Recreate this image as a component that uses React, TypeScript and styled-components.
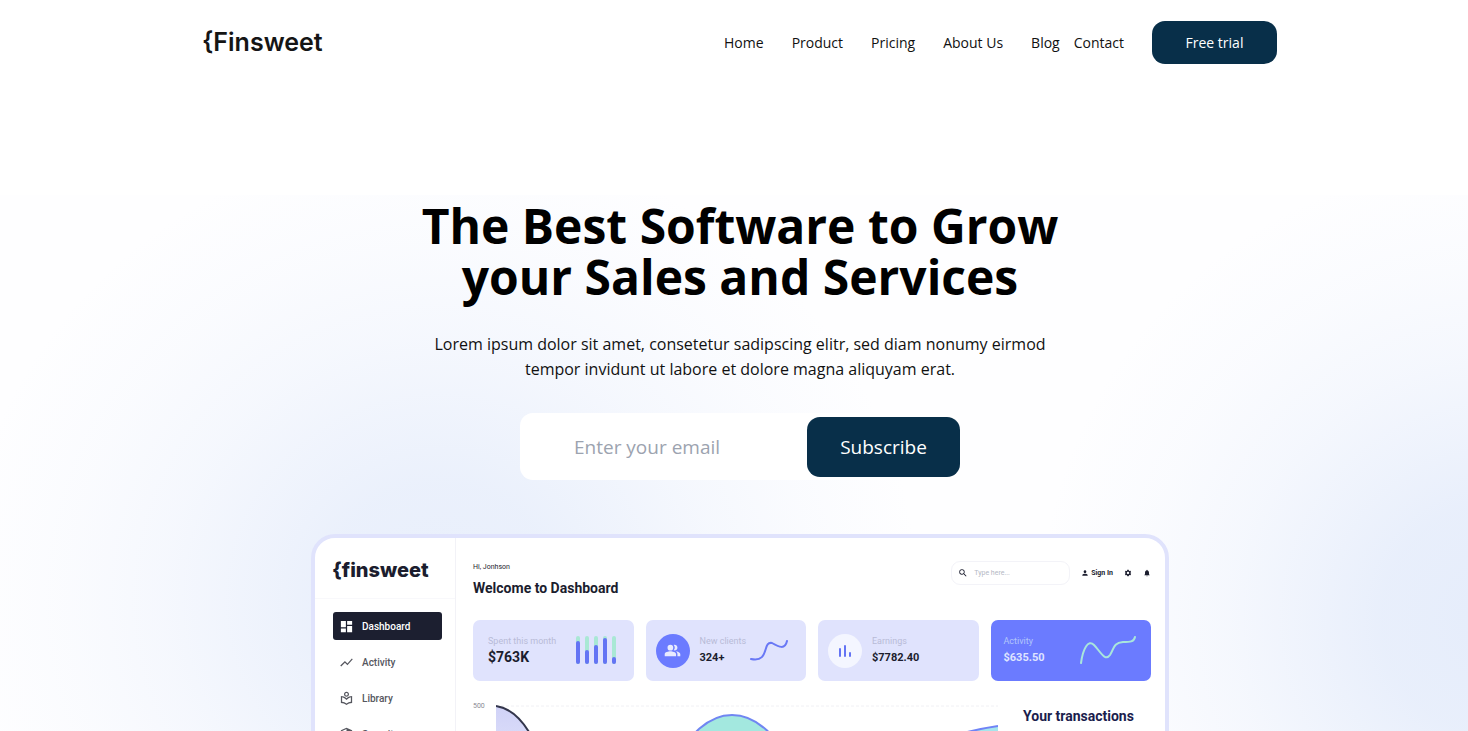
import React from "react";
import styled, { createGlobalStyle } from "styled-components";
import { MdDashboard, MdShowChart, MdOutlineLocalLibrary, MdSecurity, MdPeopleAlt, MdPerson, MdSettings, MdNotifications, MdSearch } from "react-icons/md";

const GlobalStyle = createGlobalStyle`
  *, *::before, *::after { box-sizing: border-box; }
  body { margin: 0; background: #fff; color: #000; font-family: "Open Sans", "Noto Sans", sans-serif; }
  button, input { font: inherit; border: 0; }
  h1, h2, h3, p, ul { margin: 0; padding: 0; }
`;

const Page = styled.div`
  display: flex;
  flex-direction: column;
  height: 100vh;
  overflow: hidden;
`;

const Header = styled.header`
  display: flex;
  justify-content: space-between;
  align-items: center;
  width: 100%;
  max-width: 1468px;
  margin: 0 auto;
  padding: 21px 191px 131px 202px;
`;

const Brand = styled.a`
  color: #151515;
  font: 600 25px/43px Inter, sans-serif;
  text-decoration: none;
`;

const Nav = styled.nav`
  display: flex;
  align-items: center;
  gap: 28px;
`;

const NavGroup = styled.span`
  display: flex;
  gap: 14px;
`;

const NavLink = styled.a`
  color: #111;
  font-size: 14px;
  text-decoration: none;
`;

const TrialButton = styled.button`
  width: 125px;
  height: 43px;
  border-radius: 13px;
  background: #082f49;
  color: #fff;
  font-size: 14px;
`;

const Hero = styled.main`
  display: flex;
  flex: 1 0 auto;
  flex-direction: column;
  align-items: center;
  padding: 5px 0 0 12px;
  background:
    radial-gradient(ellipse 480px 460px at 30% 405px, rgba(200, 216, 246, 0.4) 0%, rgba(200, 216, 246, 0.36) 25%, rgba(200, 216, 246, 0.26) 42%, rgba(200, 216, 246, 0.16) 58%, rgba(200, 216, 246, 0.07) 78%, rgba(200, 216, 246, 0) 100%),
    radial-gradient(ellipse 460px 460px at 102% 425px, rgba(200, 216, 246, 0.46) 0%, rgba(200, 216, 246, 0.4) 25%, rgba(200, 216, 246, 0.28) 42%, rgba(200, 216, 246, 0.17) 58%, rgba(200, 216, 246, 0.07) 78%, rgba(200, 216, 246, 0) 100%),
    #fefeff;
`;

const Title = styled.h1`
  max-width: 700px;
  font-size: 48px;
  line-height: 51px;
  font-weight: 700;
  text-align: center;
`;

const Lead = styled.p`
  max-width: 640px;
  margin-top: 30px;
  color: #111;
  font-size: 16px;
  line-height: 25px;
  text-align: center;
`;

const Signup = styled.form`
  display: flex;
  align-items: center;
  width: 440px;
  height: 67px;
  margin: 31px 0 54px;
  border-radius: 13px;
  background: #fff;
`;

const EmailInput = styled.input`
  flex: 1;
  min-width: 0;
  padding: 0 20px 0 54px;
  background: transparent;
  font-size: 19px;
  outline: none;
  &::placeholder { color: #9ca3af; opacity: 1; }
`;

const SubscribeButton = styled.button`
  width: 153px;
  height: 60px;
  border-radius: 13px;
  background: #082f49;
  color: #fff;
  font-size: 19px;
`;

const Dashboard = styled.section`
  display: grid;
  grid-template-columns: 141px 1fr;
  width: 858px;
  height: 560px;
  margin-bottom: -362px;
  border: 4px solid #e0e3fc;
  border-radius: 24px;
  background: #fff;
  color: #1b1d2e;
  font-family: Roboto, sans-serif;
`;

const Sidebar = styled.aside`
  border-right: 1px solid #f2f2f7;
`;

const SideBrand = styled.div`
  height: 61px;
  padding: 16px 0 0 17px;
  border-bottom: 1px solid #f8f8fb;
  font: 800 20px/32px Inter, sans-serif;
`;

const Menu = styled.ul`
  display: flex;
  flex-direction: column;
  gap: 8px;
  padding: 13px 13px 0 18px;
  list-style: none;
`;

const MenuButton = styled.button<{ $active?: boolean }>`
  display: flex;
  align-items: center;
  gap: 8px;
  width: 100%;
  height: 28px;
  padding: 0 6px;
  border-radius: 3px;
  background: ${(p) => (p.$active ? "#1c1f30" : "transparent")};
  color: ${(p) => (p.$active ? "#fff" : "#55565e")};
  font-size: 10px;
  font-weight: 500;
  svg { width: 15px; height: 15px; }
`;

const Content = styled.div`
  display: flex;
  flex-direction: column;
  padding: 23px 14px 0 17px;
`;

const TopBar = styled.div`
  display: flex;
  justify-content: space-between;
`;

const Greeting = styled.p`
  font-size: 7px;
  line-height: 12px;
`;

const Welcome = styled.h2`
  font-size: 14px;
  line-height: 30px;
  font-weight: 700;
`;

const Tools = styled.div`
  display: flex;
  align-items: center;
  gap: 11px;
  height: 24px;
`;

const SearchBox = styled.label`
  display: flex;
  align-items: center;
  gap: 6px;
  width: 119px;
  height: 24px;
  padding: 0 6px;
  border: 1px solid #f3f3f8;
  border-radius: 9px;
`;

const SearchInput = styled.input`
  width: 80px;
  padding: 0;
  background: transparent;
  font-size: 7px;
  outline: none;
  &::placeholder { color: #b4b8c4; opacity: 1; }
`;

const ToolButton = styled.button`
  display: flex;
  align-items: center;
  gap: 2px;
  padding: 0;
  background: transparent;
  color: #1b1d2e;
  font-size: 7px;
  font-weight: 700;
`;

const Cards = styled.div`
  display: grid;
  grid-template-columns: repeat(4, minmax(0, 1fr));
  gap: 12px;
  margin-top: 17px;
`;

const Card = styled.article<{ $accent?: boolean; $inset: number }>`
  display: flex;
  align-items: center;
  gap: 10px;
  height: 61px;
  padding: 0 ${(p) => (p.$accent ? 15 : 18)}px 0 ${(p) => p.$inset}px;
  border-radius: 7px;
  background: ${(p) => (p.$accent ? "#6b7bff" : "#e0e3fd")};
  color: ${(p) => (p.$accent ? "#dfe4ff" : "#1b1d2e")};
`;

const CardText = styled.div`
  flex: 1;
  min-width: 0;
  padding-bottom: 3px;
  white-space: nowrap;
`;

const CardLabel = styled.h3<{ $accent?: boolean }>`
  color: ${(p) => (p.$accent ? "#b2c6fb" : "#b8bbd7")};
  font-size: 9px;
  line-height: 16px;
  font-weight: 400;
`;

const CardValue = styled.p<{ $size: number }>`
  font-size: ${(p) => p.$size}px;
  line-height: 17px;
  font-weight: 700;
`;

const Badge = styled.span<{ $light?: boolean }>`
  display: grid;
  place-items: center;
  flex: none;
  width: 34px;
  height: 34px;
  border-radius: 50%;
  background: ${(p) => (p.$light ? "#f4f6ff" : "#6b7bff")};
  color: #e8ebff;
`;

const Lower = styled.div`
  display: flex;
  margin-top: 18px;
`;

const AxisLabel = styled.span`
  width: 23px;
  color: #8a8b93;
  font-size: 7px;
  line-height: 15px;
`;

const Transactions = styled.h2`
  margin-left: 25px;
  color: #1b1d4d;
  font-size: 14px;
  line-height: 35px;
  font-weight: 700;
`;

const navItems = ["Home", "Product", "Pricing", "About Us"];
const menuItems = [
  { label: "Dashboard", icon: <MdDashboard /> },
  { label: "Activity", icon: <MdShowChart /> },
  { label: "Library", icon: <MdOutlineLocalLibrary /> },
  { label: "Security", icon: <MdSecurity /> },
];
const spending = [5, 14, 9, 2, 21];

function SpendingBars() {
  return (
    <svg width="42" height="30" viewBox="0 0 42 30" strokeWidth="4" strokeLinecap="round" aria-hidden="true">
      {spending.map((top, i) => (
        <g key={i}>
          <path d={`M${4 + i * 9} 2V26`} stroke="#a9e8d5" />
          <path d={`M${4 + i * 9} ${top + 2}V26`} stroke="#6474f4" />
        </g>
      ))}
    </svg>
  );
}

function Chart() {
  return (
    <svg width="502" height="120" viewBox="0 0 502 120" fill="none" aria-hidden="true">
      <defs>
        <linearGradient id="lavender" x1="0" y1="0" x2="0" y2="1">
          <stop stopColor="#d0d2f7" />
          <stop offset="1" stopColor="#eceefe" />
        </linearGradient>
      </defs>
      <path d="M0 7H502" stroke="#f0f0f4" strokeDasharray="3 2" />
      <path d="M0 7C14 9 25 20 33 33C48 58 58 86 74 110H0Z" fill="url(#lavender)" />
      <path d="M0 7C14 9 25 20 33 33C48 58 58 86 74 110" stroke="#33364c" strokeWidth="2" />
      <path d="M170 70C192 41 208 16 236 16S281 41 302 70Z" fill="#a3e8df" stroke="#7086f2" strokeWidth="2" />
      <path d="M440 42C461 35 482 30 502 27V70H440Z" fill="#a6e5ec" />
      <path d="M440 42C461 35 482 30 502 27" stroke="#6f83f6" strokeWidth="2" />
    </svg>
  );
}

export default function App() {
  return (
    <>
      <GlobalStyle />
      <Page>
        <Header>
          <Brand href="#">{"{Finsweet"}</Brand>
          <Nav>
            {navItems.map((item) => <NavLink href="#" key={item}>{item}</NavLink>)}
            <NavGroup>
              <NavLink href="#">Blog</NavLink>
              <NavLink href="#">Contact</NavLink>
            </NavGroup>
            <TrialButton type="button">Free trial</TrialButton>
          </Nav>
        </Header>
        <Hero>
          <Title>The Best Software to Grow<br />your Sales and Services</Title>
          <Lead>
            Lorem ipsum dolor sit amet, consetetur sadipscing elitr, sed diam nonumy eirmod
            tempor invidunt ut labore et dolore magna aliquyam erat.
          </Lead>
          <Signup onSubmit={(e) => e.preventDefault()}>
            <EmailInput type="email" placeholder="Enter your email" aria-label="Enter your email" />
            <SubscribeButton type="submit">Subscribe</SubscribeButton>
          </Signup>
          <Dashboard>
            <Sidebar>
              <SideBrand>{"{finsweet"}</SideBrand>
              <Menu>
                {menuItems.map((item, i) => (
                  <li key={item.label}>
                    <MenuButton type="button" $active={i === 0}>{item.icon}{item.label}</MenuButton>
                  </li>
                ))}
              </Menu>
            </Sidebar>
            <Content>
              <TopBar>
                <div>
                  <Greeting>Hi, Jonhson</Greeting>
                  <Welcome>Welcome to Dashboard</Welcome>
                </div>
                <Tools>
                  <SearchBox>
                    <MdSearch size={10} />
                    <SearchInput placeholder="Type here..." aria-label="Search" />
                  </SearchBox>
                  <ToolButton type="button"><MdPerson size={8} />Sign In</ToolButton>
                  <ToolButton type="button" aria-label="Settings"><MdSettings size={8} /></ToolButton>
                  <ToolButton type="button" aria-label="Notifications"><MdNotifications size={8} /></ToolButton>
                </Tools>
              </TopBar>
              <Cards>
                <Card $inset={15}>
                  <CardText>
                    <CardLabel>Spent this month</CardLabel>
                    <CardValue $size={14}>$763K</CardValue>
                  </CardText>
                  <SpendingBars />
                </Card>
                <Card $inset={10}>
                  <Badge><MdPeopleAlt size={17} /></Badge>
                  <CardText>
                    <CardLabel>New clients</CardLabel>
                    <CardValue $size={11}>324+</CardValue>
                  </CardText>
                  <svg width="38" height="22" viewBox="0 0 38 22" fill="none" stroke="#6978f5" strokeWidth="2" strokeLinecap="round" aria-hidden="true">
                    <path d="M1 19C20 23 12 1 22 3C29 7 35 10 37 1" />
                  </svg>
                </Card>
                <Card $inset={10}>
                  <Badge $light>
                    <svg width="14" height="14" viewBox="0 0 14 14" stroke="#6474f4" strokeWidth="2" strokeLinecap="round" aria-hidden="true">
                      <path d="M2 5V12M7 2V12M12 9V12" />
                    </svg>
                  </Badge>
                  <CardText>
                    <CardLabel>Earnings</CardLabel>
                    <CardValue $size={11}>$7782.40</CardValue>
                  </CardText>
                </Card>
                <Card $accent $inset={13}>
                  <CardText>
                    <CardLabel $accent>Activity</CardLabel>
                    <CardValue $size={11}>$635.50</CardValue>
                  </CardText>
                  <svg width="56" height="30" viewBox="0 0 56 30" fill="none" stroke="#a9e6dc" strokeWidth="2" strokeLinecap="round" aria-hidden="true">
                    <path d="M1 27C3 13 8 3 14 9C20 15 25 26 30 19C34 13 33 7 43 6C50 6 54 6 55 1" />
                  </svg>
                </Card>
              </Cards>
              <Lower>
                <AxisLabel>500</AxisLabel>
                <Chart />
                <Transactions>Your transactions</Transactions>
              </Lower>
            </Content>
          </Dashboard>
        </Hero>
      </Page>
    </>
  );
}
